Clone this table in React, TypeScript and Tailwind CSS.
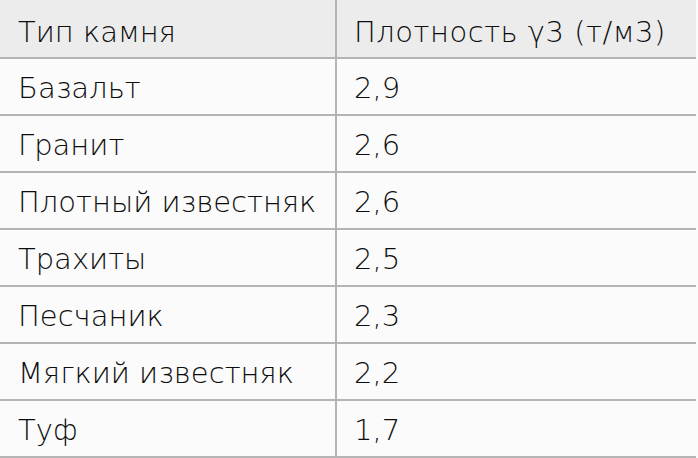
const rows: [string, string][] = [
  ["Базальт", "2,9"],
  ["Гранит", "2,6"],
  ["Плотный известняк", "2,6"],
  ["Трахиты", "2,5"],
  ["Песчаник", "2,3"],
  ["Мягкий известняк", "2,2"],
  ["Туф", "1,7"],
];

const App = () => {
  return (
    <div className="w-[698px] h-[458px] bg-[#fbfbfb] text-[#0d0d0d] font-['DejaVu_Sans',sans-serif] font-extralight text-[29px] leading-[35px] overflow-hidden">
      <div className="grid grid-cols-[337px_1fr] h-[59px] bg-[#ececec] border-b-2 border-[#b4b4b4] w-[696px]">
        <div className="flex items-center pl-[18px] pt-[8px] border-r-2 border-[#b4b4b4]">Тип камня</div>
        <div className="flex items-center pl-[17px] pt-[8px] tracking-[0.5px]">Плотность γ3 (т/м3)</div>
      </div>
      {rows.map(([name, value]) => (
        <div
          key={name}
          className="grid grid-cols-[337px_1fr] h-[57px] border-b-2 border-[#b4b4b4] w-[696px]"
        >
          <div className="flex items-center pl-[18px] pt-[4px] border-r-2 border-[#b4b4b4]">{name}</div>
          <div className="flex items-center pl-[17px] pt-[4px]">{value}</div>
        </div>
      ))}
    </div>
  );
};

export default App;
